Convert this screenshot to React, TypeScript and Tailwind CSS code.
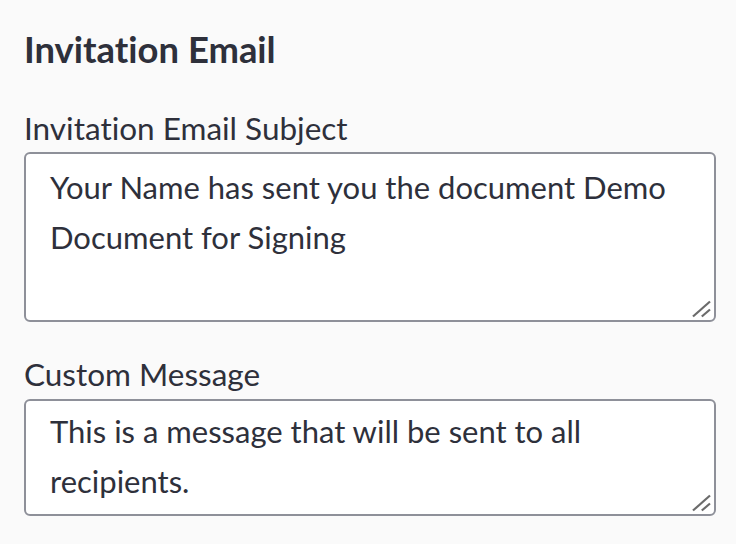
import React from "react";

function Grip() {
  return (
    <svg
      className="pointer-events-none absolute right-[4px] bottom-[4px]"
      width="20"
      height="18"
      viewBox="0 0 20 18"
    >
      <line x1="1" y1="16.5" x2="18" y2="1.5" stroke="#6b6b6b" strokeWidth="2.2" />
      <line x1="9.8" y1="16.5" x2="18" y2="9.5" stroke="#6b6b6b" strokeWidth="2.2" />
    </svg>
  );
}

export default function App() {
  const font = { fontFamily: "Lato, 'Open Sans', sans-serif", fontVariantLigatures: "none" as const };
  return (
    <div
      className="w-[736px] h-[544px] bg-[#fafafa] overflow-hidden flex flex-col pl-[24px] pr-[20px] pt-[27px] text-[#2e303b]"
      style={font}
    >
      <h2 className="text-[36.4px] leading-[44px] font-bold">Invitation Email</h2>
      <label className="mt-[39px] text-[31.5px] leading-[36px]">Invitation Email Subject</label>
      <div className="relative mt-[6px] w-[692px] h-[170px]">
        <textarea
          readOnly
          className="block w-full h-full resize-none box-border bg-white border-2 border-[#8e9099] rounded-[6px] pl-[24px] pr-[18px] pt-[8px] text-[31px] leading-[50px] text-[#2e303b] outline-none overflow-hidden"
          style={font}
          value="Your Name has sent you the document Demo Document for Signing"
        />
        <Grip />
      </div>
      <label className="mt-[34px] text-[31.5px] leading-[36px]">Custom Message</label>
      <div className="relative mt-[7px] w-[692px] h-[117px]">
        <textarea
          readOnly
          className="block w-full h-full resize-none box-border bg-white border-2 border-[#8e9099] rounded-[6px] pl-[24px] pr-[18px] pt-[5px] text-[31px] leading-[50px] text-[#2e303b] outline-none overflow-hidden"
          style={font}
          value="This is a message that will be sent to all recipients."
        />
        <Grip />
      </div>
    </div>
  );
}
